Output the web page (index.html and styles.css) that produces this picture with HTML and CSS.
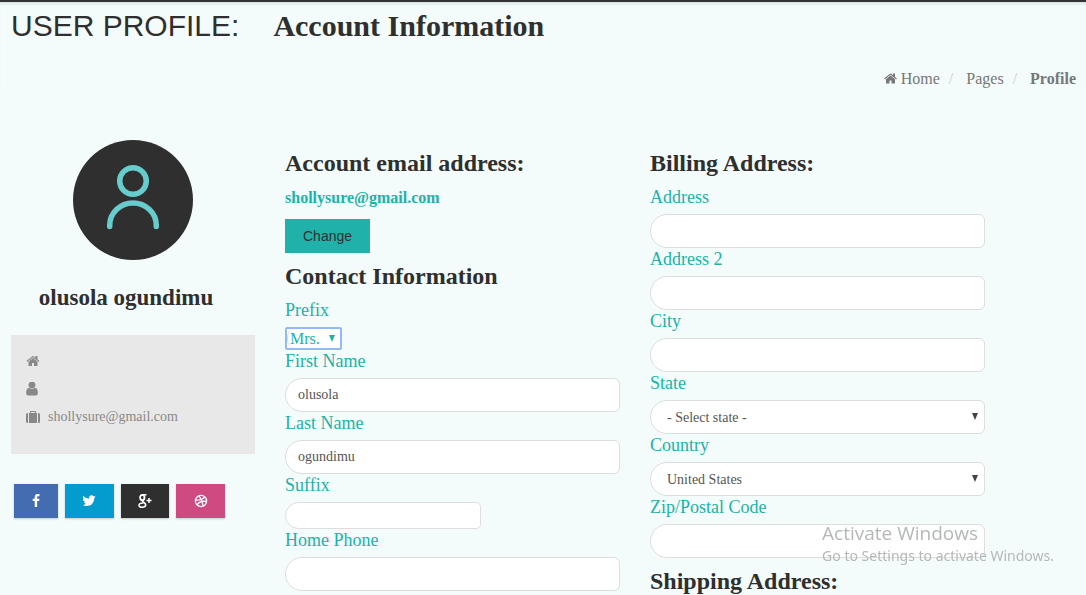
FILE: index.html
```html
<!DOCTYPE html>
<html lang="en">
<head>
<meta charset="utf-8">
<meta name="viewport" content="width=device-width, initial-scale=1">
<title>User Profile</title>
<link rel="stylesheet" href="styles.css">
</head>
<body>
<svg class="sprite" aria-hidden="true">
  <symbol id="home" viewBox="0 0 1664 1792"><path d="M1408 992v480q0 26-19 45t-45 19h-384v-384h-256v384h-384q-26 0-45-19t-19-45v-480q0-1 .5-3t.5-3l575-474 575 474q1 2 1 6zm223-69l-62 74q-8 9-21 11h-3q-13 0-21-7l-692-577-692 577q-12 8-24 7-13-2-21-11l-62-74q-8-10-7-23.500t11-21.500l719-599q32-26 76-26t76 26l244 204v-195q0-14 9-23t23-9h192q14 0 23 9t9 23v408l219 182q10 8 11 21.500t-7 23.500z"/></symbol>
</svg>
<header class="page-head">
  <h1 class="page-title">USER PROFILE: <span class="page-subtitle">Account Information</span></h1>
  <nav aria-label="Breadcrumb">
    <ol class="breadcrumb">
      <li><a href="#"><svg class="crumb-icon" aria-hidden="true"><use href="#home"/></svg>Home</a></li>
      <li><a href="#">Pages</a></li>
      <li class="current" aria-current="page">Profile</li>
    </ol>
  </nav>
</header>
<main class="columns">
  <aside class="profile">
    <svg class="avatar" viewBox="0 0 120 120" role="img" aria-label="Avatar">
      <circle cx="60" cy="60" r="60" fill="#2f2f2f"/>
      <g fill="none" stroke="#66cccc" stroke-width="5.500" stroke-linecap="round">
        <circle cx="60" cy="41" r="13.300"/>
        <path d="M36.700 86.500v-1a23.300 22.500 0 0 1 46.600 0v1"/>
      </g>
    </svg>
    <h2 class="profile-name">olusola ogundimu</h2>
    <ul class="contact">
      <li><svg class="contact-icon" aria-hidden="true"><use href="#home"/></svg></li>
      <li><svg class="contact-icon" viewBox="256 192 1280 1536" aria-hidden="true"><path d="M1536 1399q0 109-62.500 187t-150.500 78h-854q-88 0-150.500-78t-62.500-187q0-85 8.500-160.500t31.500-152 58.500-131 94-89 134.500-34.500q131 128 313 128t313-128q76 0 134.500 34.500t94 89 58.500 131 31.500 152 8.500 160.500zm-256-887q0 159-112.500 271.500t-271.500 112.500-271.500-112.500-112.500-271.500 112.500-271.500 271.500-112.500 271.500 112.500 112.500 271.500z"/></svg></li>
      <li><svg class="contact-icon" viewBox="0 0 14 14" aria-hidden="true"><path d="M2 3v10h-.5A1.500 1.500 0 0 1 0 11.500v-7A1.500 1.500 0 0 1 1.500 3zM12 3h.5A1.500 1.500 0 0 1 14 4.500v7a1.500 1.500 0 0 1-1.500 1.500H12zM3 3h1V1.700Q4 1 4.700 1h4.600q.7 0 .7.700V3h1v10H3zM5 3h4V2H5z"/></svg>shollysure@gmail.com</li>
    </ul>
    <div class="social">
      <a class="facebook" href="#" aria-label="Facebook"><svg viewBox="0 0 1792 1792"><path d="M1343 12v264h-157q-86 0-116 36t-30 108v189h293l-39 296h-254v759h-306v-759h-255v-296h255v-218q0-186 104-288.500t277-102.500q147 0 228 12z"/></svg></a>
      <a class="twitter" href="#" aria-label="Twitter"><svg viewBox="60 100 1664 1664"><path d="M1684 408q-67 98-162 167 1 14 1 42 0 130-38 259.500t-115.500 248.500-184.500 210.500-258 146-323 54.500q-271 0-496-145 35 4 78 4 225 0 401-138-105-2-188-64.500t-114-159.500q33 5 61 5 43 0 85-11-112-23-185.500-111.500t-73.500-205.500v-4q68 38 146 41-66-44-105-115t-39-154q0-88 44-163 121 149 294.500 238.500t371.500 99.500q-8-38-8-74 0-134 94.500-228.500t228.500-94.500q140 0 236 102 109-21 205-78-37 115-142 178 93-10 186-50z"/></svg></a>
      <a class="google" href="#" aria-label="Google Plus"><svg viewBox="0 0 14 14"><g fill="none" stroke="#fff"><ellipse cx="4.300" cy="3.600" rx="2.200" ry="2.700" stroke-width="1.800"/><path d="M4 .8h4.500M5.500 6.200Q4 7 5 8q3 1.500 2.700 3.200Q7.400 13.200 4.200 13.200T1 11.200Q1.200 9 5.200 9" stroke-width="1.600"/><path d="M11 4v5M8.500 6.500h5" stroke-width="1.500"/></g></svg></a>
      <a class="dribbble" href="#" aria-label="Dribbble"><svg viewBox="0 0 14 14"><g fill="none" stroke="#fff" stroke-width="1.300"><circle cx="7" cy="7" r="5.600"/><path d="M4.800 1.700Q8.300 6 9.300 12.300M1.400 6.200Q8 6.500 10.900 2.900M3 11Q6 6.200 12.600 7.500"/></g></svg></a>
    </div>
  </aside>

  <form class="fields">
    <h3>Account email address:</h3>
    <p class="account-email">shollysure@gmail.com</p>
    <button class="change" type="button">Change</button>
    <h3>Contact Information</h3>
    <label for="prefix">Prefix</label>
    <div class="select compact">
      <select id="prefix"><option>Mrs.</option><option>Mr.</option><option>Ms.</option></select>
    </div>
    <label for="first">First Name</label>
    <input id="first" type="text" value="olusola">
    <label for="last">Last Name</label>
    <input id="last" type="text" value="ogundimu">
    <label for="suffix">Suffix</label>
    <input class="short" id="suffix" type="text">
    <label for="phone">Home Phone</label>
    <input id="phone" type="tel">
  </form>

  <form class="fields">
    <h3>Billing Address:</h3>
    <label for="address">Address</label>
    <input id="address" type="text">
    <label for="address2">Address 2</label>
    <input id="address2" type="text">
    <label for="city">City</label>
    <input id="city" type="text">
    <label for="state">State</label>
    <div class="select">
      <select id="state"><option>- Select state -</option></select>
    </div>
    <label for="country">Country</label>
    <div class="select">
      <select id="country"><option>United States</option></select>
    </div>
    <label for="zip">Zip/Postal Code</label>
    <input id="zip" type="text">
    <h3>Shipping Address:</h3>
  </form>
</main>
<div class="watermark">
  <p class="watermark-title">Activate Windows</p>
  <p>Go to Settings to activate Windows.</p>
</div>
</body>
</html>
```

FILE: styles.css
```css
* { box-sizing: border-box; }

body {
  margin: 0;
  border-top: 2px solid #333;
  background: #f3fcfb;
  color: #2f2f2f;
  font-family: "Liberation Serif", "Times New Roman", serif;
}

h1, h2, h3, p, ul, ol { margin: 0; padding: 0; }
ul, ol { list-style: none; }
a { color: inherit; text-decoration: none; }
.sprite { display: none; }

.page-head {
  padding: 3px 10px 0 11px;
  box-shadow: inset 0 4px 4px -3px rgba(0, 0, 0, 0.15);
}

.page-title {
  display: flex;
  flex-wrap: wrap;
  gap: 0 34px;
  font: 400 30px/42px "Liberation Sans", Arial, sans-serif;
}

.page-subtitle {
  font-family: "Liberation Serif", "Times New Roman", serif;
  font-weight: 700;
}

.breadcrumb {
  display: flex;
  justify-content: flex-end;
  margin-top: 22px;
  color: #777;
  font-size: 16px;
  line-height: 20px;
}

.breadcrumb li + li::before {
  content: "/";
  padding: 0 13px 0 9px;
  color: #ccc;
  font-weight: 400;
}

.breadcrumb .current { font-weight: 700; }

.crumb-icon {
  width: 13px;
  height: 15px;
  margin-right: 4px;
  vertical-align: -2px;
  fill: currentColor;
}

.columns {
  display: grid;
  grid-template-columns: 244fr 335fr 335fr;
  gap: 30px;
  align-items: start;
  padding: 51px 101px 0 11px;
}

.profile { display: flex; flex-direction: column; }

.avatar { align-self: center; width: 120px; height: 120px; }

.profile-name {
  margin: 24px 14px 24px 0;
  font-size: 23px;
  line-height: 27px;
  text-align: center;
}

.contact {
  padding: 12px 15px 23px;
  background: #e8e8e8;
  color: #888;
  font-size: 14px;
  line-height: 28px;
}

.contact li { display: flex; align-items: center; gap: 8px; height: 28px; }
.contact-icon { width: 14px; height: 14px; fill: currentColor; }
.contact li:nth-child(2) .contact-icon { width: 12px; }

.social { display: flex; gap: 7px; margin: 30px 30px 0 3px; }

.social a {
  display: flex;
  flex: 1;
  align-items: center;
  justify-content: center;
  height: 34px;
  box-shadow: 0 1px 2px rgba(0, 0, 0, 0.2);
}

.social svg { width: 14px; height: 14px; fill: #fff; }
.social .facebook { flex: 0 1 44px; background: #446cb0; }
.social .twitter { background: #049bce; }
.social .google { background: #2f2f2f; }
.social .dribbble { background: #ce4a81; }

.fields { display: flex; flex-direction: column; align-items: flex-start; padding-top: 10px; }

h3 { margin-bottom: 10px; font-size: 24px; line-height: 26px; }
* + h3 { margin-top: 10px; }
h3:last-child { margin-bottom: 0; }

.account-email {
  margin-bottom: 10px;
  color: #20b2aa;
  font-size: 16px;
  font-weight: 700;
  line-height: 23px;
}

.change {
  padding: 0 18px;
  border: 0;
  background: #20b2aa;
  color: #2f2f2f;
  font: 14px/34px "Liberation Sans", Arial, sans-serif;
}

label { margin-bottom: 5px; color: #20b2aa; font-size: 18px; line-height: 23px; }

input, select {
  width: 100%;
  height: 34px;
  padding: 0 12px;
  border: 1px solid #ddd;
  border-radius: 17px 6px 6px 17px;
  background: #fff;
  color: #555;
  font: 14px "Liberation Serif", "Times New Roman", serif;
}

.short { width: 196px; height: 27px; }

.select { position: relative; width: 100%; }
.select select { display: block; padding-left: 16px; appearance: none; }

.select::after {
  content: "";
  position: absolute;
  top: 13px;
  right: 7px;
  width: 6px;
  height: 7px;
  background: #444;
  clip-path: polygon(0 0, 100% 0, 50% 100%);
  pointer-events: none;
}

.compact {
  width: 57px;
  border: 2px solid #94b9f7;
  border-radius: 2px;
  background: #fff;
}

.compact select {
  height: 19px;
  padding: 0 0 0 2px;
  border-width: 0 0 0 1px;
  border-radius: 8px 0 0 8px;
  color: #20b2aa;
  font-size: 16px;
}

.compact::after { top: 6px; right: 5px; background: #20b2aa; }

.watermark {
  position: fixed;
  right: 32px;
  bottom: 29px;
  color: #b4b8b8;
  font: 14px/20px "Noto Sans", "Open Sans", sans-serif;
  pointer-events: none;
}

.watermark-title { font-family: "Open Sans", "Noto Sans", sans-serif; font-size: 19px; line-height: 26px; }
```
